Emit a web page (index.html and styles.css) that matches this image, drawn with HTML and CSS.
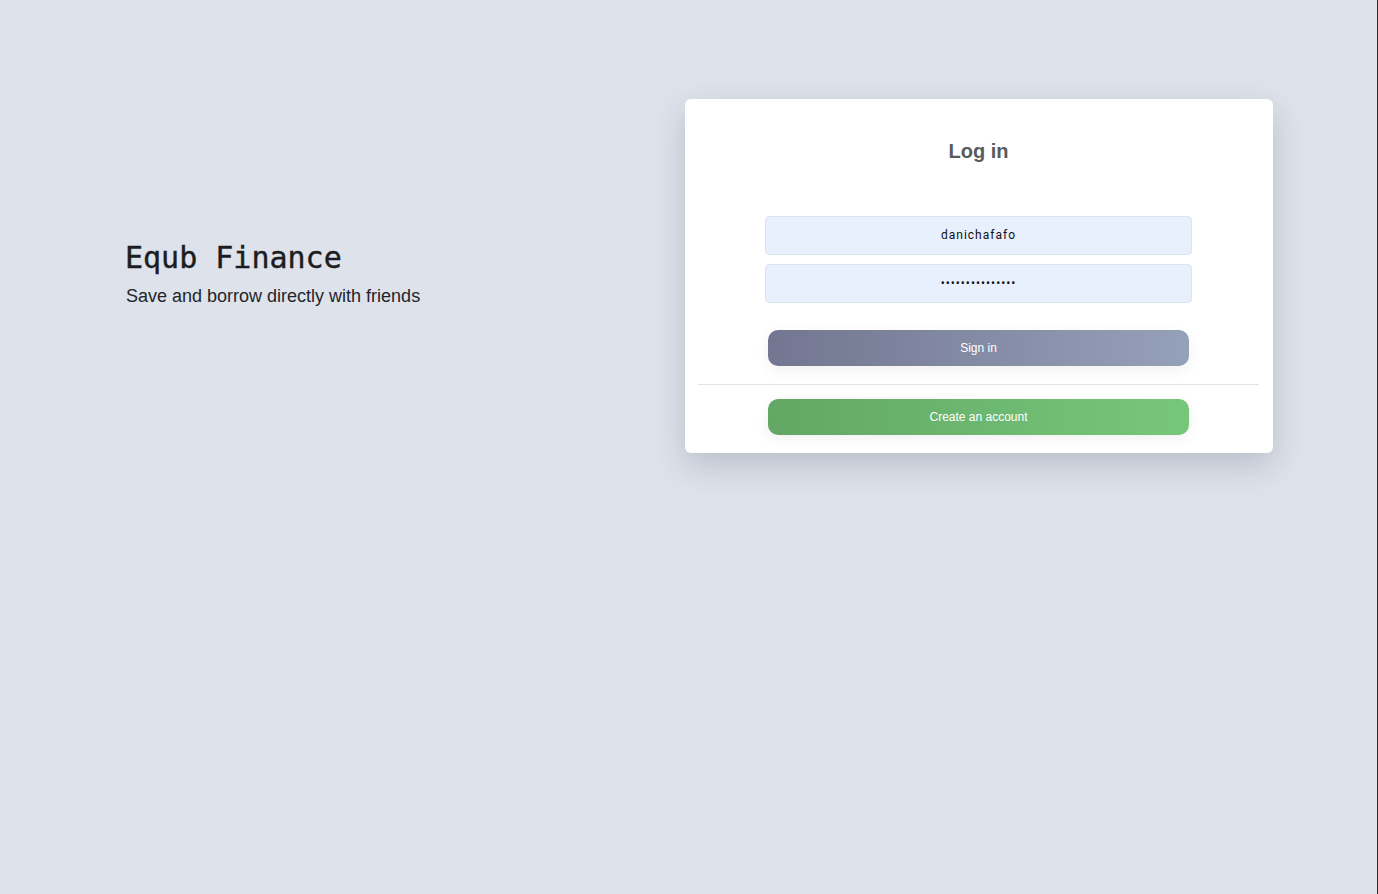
FILE: index.html
```html
<!DOCTYPE html>
<html lang="en">
<head>
<meta charset="utf-8">
<title>Equb Finance - Log in</title>
<link rel="stylesheet" href="styles.css">
</head>
<body>
<div class="page">
  <section class="intro">
    <h1 class="brand">Equb Finance</h1>
    <p class="tagline">Save and borrow directly with friends</p>
  </section>
  <section class="card">
    <h2 class="card-title">Log in</h2>
    <form class="form">
      <input class="field" type="text" value="danichafafo">
      <input class="field" type="password" value="danichafafo1234">
      <button class="btn btn-signin" type="button">Sign in</button>
    </form>
    <hr class="divider">
    <div class="form">
      <button class="btn btn-create" type="button">Create an account</button>
    </div>
  </section>
</div>
</body>
</html>
```

FILE: styles.css
```css
html, body {
  margin: 0;
  padding: 0;
  height: 100%;
}
body {
  background: #dee2ea;
  font-family: "Liberation Sans", Arial, sans-serif;
  border-right: 1px solid #2b2b2b;
  box-sizing: border-box;
}
.page {
  display: flex;
  align-items: center;
  padding: 99px 104px 0 125px;
}
.intro {
  flex: 1;
  padding-bottom: 6px;
}
.brand {
  margin: 0;
  font-family: "DejaVu Sans Mono", "Liberation Mono", monospace;
  font-weight: normal;
  font-size: 30px;
  line-height: 36px;
  color: #1b1d20;
  -webkit-text-stroke: 0.4px #1b1d20;
}
.tagline {
  margin: 9px 0 0 1px;
  font-size: 18px;
  line-height: 22px;
  color: #22252b;
}
.card {
  width: 588px;
  box-sizing: border-box;
  background: #fff;
  border-radius: 6px;
  padding: 39px 14px 18px 13px;
  box-shadow: 0 12px 32px rgba(60, 66, 90, 0.22);
}
.card-title {
  margin: 0;
  text-align: center;
  font-size: 20px;
  line-height: 26px;
  font-weight: bold;
  color: #585b5e;
}
.form {
  display: flex;
  flex-direction: column;
  align-items: center;
}
form.form {
  margin-top: 52px;
  gap: 9px;
}
.field {
  width: 427px;
  height: 39px;
  box-sizing: border-box;
  border: 1px solid #dbe3f2;
  border-radius: 4px;
  background: #e8f0fe;
  text-align: center;
  font-family: Roboto, "Liberation Sans", sans-serif;
  font-size: 12px;
  letter-spacing: 1px;
  color: #111;
  outline: none;
  padding-bottom: 2px;
}
.btn {
  width: 421px;
  height: 36px;
  border: none;
  border-radius: 10px;
  color: #fff;
  font-family: "Liberation Sans", Arial, sans-serif;
  font-size: 12px;
  box-shadow: 0 4px 14px rgba(0, 0, 0, 0.06);
}
.btn-signin {
  margin-top: 18px;
  background: linear-gradient(90deg, #737690, #95a1b9);
}
.btn-create {
  background: linear-gradient(90deg, #62a764, #77c77b);
}
.divider {
  border: none;
  border-top: 1px solid #e2e2e2;
  margin: 18px 0 14px;
}
```
